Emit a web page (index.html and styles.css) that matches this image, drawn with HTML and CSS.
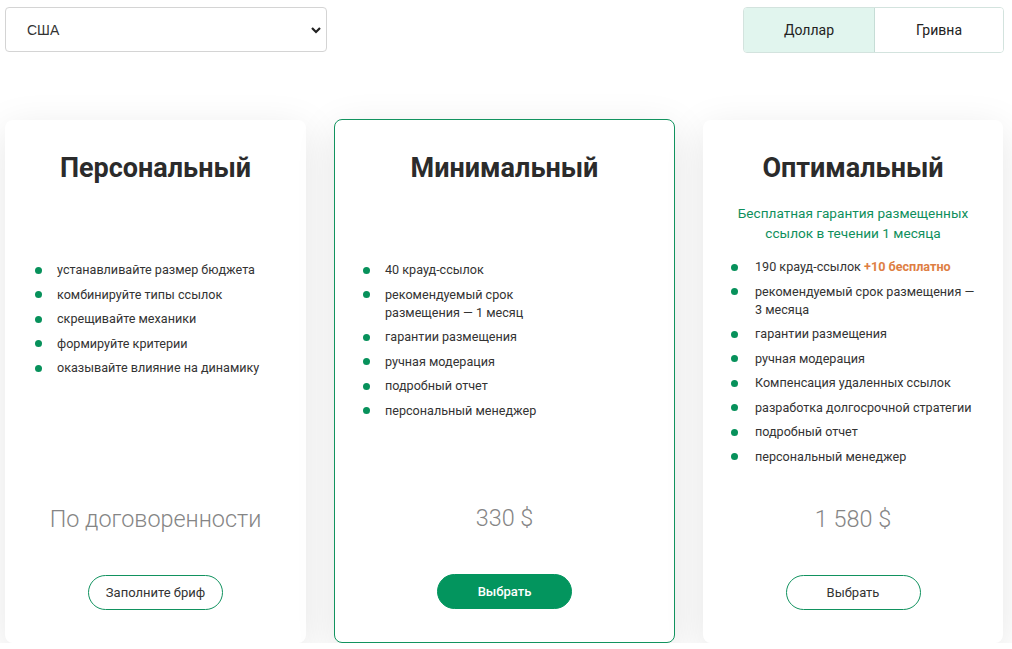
FILE: index.html
```html
<!DOCTYPE html>
<html lang="ru">
 <head>
   <meta charset="UTF-8">
   <title>Тарифы</title>
   <link rel="stylesheet" href="styles.css">
 </head>
 <body>
	<div class="top">
		<div class="country">
			<select class="country-select">
				<option>США</option>
				<option>Украина</option>
			</select>
			<svg class="chevron" width="10" height="8" viewBox="0 0 10 8"><path d="M1 2 L5 6 L9 2" fill="none" stroke="#222" stroke-width="2.2"/></svg>
		</div>
		<div class="currency">
			<button class="cur active">Доллар</button>
			<button class="cur">Гривна</button>
		</div>
	</div>

	<div class="plans">
		<!-- персональный -->
		<div class="card">
			<h2>Персональный</h2>
			<div class="note"></div>
			<ul class="features">
				<li>устанавливайте размер бюджета</li>
				<li>комбинируйте типы ссылок</li>
				<li>скрещивайте механики</li>
				<li>формируйте критерии</li>
				<li>оказывайте влияние на динамику</li>
			</ul>
			<div class="price">По договоренности</div>
			<button class="pick">Заполните бриф</button>
		</div>

		<!-- минимальный -->
		<div class="card card-mid">
			<h2>Минимальный</h2>
			<div class="note"></div>
			<ul class="features">
				<li>40 крауд-ссылок</li>
				<li>рекомендуемый срок размещения — 1 месяц</li>
				<li>гарантии размещения</li>
				<li>ручная модерация</li>
				<li>подробный отчет</li>
				<li>персональный менеджер</li>
			</ul>
			<div class="price">330 $</div>
			<button class="pick pick-fill">Выбрать</button>
		</div>

		<!-- оптимальный -->
		<div class="card card-opt">
			<h2>Оптимальный</h2>
			<div class="note">Бесплатная гарантия размещенных ссылок в течении 1 месяца</div>
			<ul class="features">
				<li><span>190 крауд-ссылок <b class="bonus">+10 бесплатно</b></span></li>
				<li>рекомендуемый срок размещения — 3 месяца</li>
				<li>гарантии размещения</li>
				<li>ручная модерация</li>
				<li>Компенсация удаленных ссылок</li>
				<li>разработка долгосрочной стратегии</li>
				<li>подробный отчет</li>
				<li>персональный менеджер</li>
			</ul>
			<div class="price">1 580 $</div>
			<button class="pick">Выбрать</button>
		</div>
	</div>
 </body>
</html>
```

FILE: styles.css
```css
body{
	margin:0;
	font-family:Roboto, "Liberation Sans", sans-serif;
	color:#333;
	background:#fff;
}
/* верхняя строка */
.top{
	display:flex;
	justify-content:space-between;
	align-items:flex-start;
	padding:7px 8px 0 5px;
}
.country{
	position:relative;
	width:322px;
}
.country-select{
	-webkit-appearance:none;
	appearance:none;
	width:100%;
	height:45px;
	padding:0 0 0 21px;
	border:1px solid #d4d4d4;
	border-radius:4px;
	background:#fff;
	font-family:"Liberation Sans", Arial, sans-serif;
	font-size:14px;
	color:#333;
}
.chevron{
	position:absolute;
	right:6px;
	top:19px;
}
.currency{
	display:flex;
	height:46px;
	box-sizing:border-box;
	border:1px solid #d3e3de;
	border-radius:4px;
	overflow:hidden;
}
.cur{
	width:128px;
	border:0;
	background:#fff;
	font-family:Roboto, sans-serif;
	font-size:14px;
	color:#222;
}
.cur.active{
	width:131px;
	background:#e1f5ee;
	border-right:1px solid #c6ddd6;
}

/* карточки */
.plans{
	display:grid;
	grid-template-columns:301px 341px 300px;
	column-gap:28px;
	padding:67px 0 0 5px;
}
.card{
	display:flex;
	flex-direction:column;
	align-items:center;
	height:523px;
	box-sizing:border-box;
	padding:33px 0 33px;
	background:#fff;
	border-radius:8px;
	box-shadow:0 10px 40px rgba(0,0,0,0.1);
}
.card-mid{
	margin-top:-1px;
	height:524px;
	border:1px solid #12935f;
	padding-top:33px;
}
.card h2{
	margin:0;
	font-size:27px;
	line-height:30px;
	font-weight:700;
	color:#2b2b2b;
}
.note{
	height:78px;
	box-sizing:border-box;
	padding:20px 20px 0;
	text-align:center;
	font-size:13.6px;
	line-height:20px;
	color:#0f8f5c;
}
.card-opt .note{
	height:75px;
}
.features{
	align-self:stretch;
	flex:1;
	list-style:none;
	margin:0;
	padding:0 0 0 30px;
	font-size:12.6px;
	line-height:18px;
	color:#333;
}
.features li{
	display:flex;
	margin-bottom:6.5px;
}
.features li::before{
	content:"";
	flex:none;
	width:7px;
	height:7px;
	margin:5.5px 15px 0 0;
	border-radius:50%;
	background:#07915b;
}
.card-mid .features{
	padding-left:28px;
}
.card-mid .features li{
	max-width:203px;
}
.card-opt .features{
	padding-left:28px;
}
.card-opt .features li{
	max-width:246px;
}
.card-opt .features li::before{
	margin-right:17px;
}
.bonus{
	color:#de7e43;
}
.price{
	font-size:23.4px;
	line-height:28px;
	font-weight:300;
	color:#858585;
	margin-bottom:42px;
}
/* кнопки */
.pick{
	width:135px;
	height:35px;
	border:1px solid #11925f;
	border-radius:18px;
	background:#fff;
	font-family:Roboto, sans-serif;
	font-size:13px;
	color:#333;
}
.pick-fill{
	background:#03955e;
	border-color:#03955e;
	color:#fff;
	font-weight:500;
}
```
